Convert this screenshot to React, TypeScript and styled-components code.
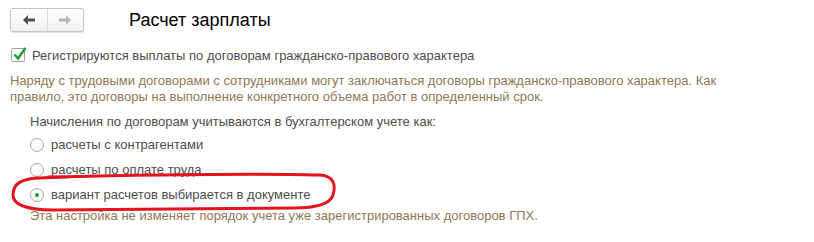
import React from "react";
import styled, { createGlobalStyle } from "styled-components";

const GlobalStyle = createGlobalStyle`
    html, body {
        margin: 0;
        padding: 0;
        background: #fff;
    }
    body {
        font-family: "Liberation Sans", Arial, sans-serif;
        font-size: 13px;
        color: #4d4d4d;
    }
`;

const Page = styled.div`
    position: relative;
    width: 814px;
    height: 242px;
    padding: 8px 10px 0;
    box-sizing: border-box;
    overflow: hidden;
`;

const Header = styled.div`
    display: flex;
    align-items: center;
    height: 24px;
`;

const NavGroup = styled.div`
    display: flex;
    width: 74px;
    height: 24px;
    box-sizing: border-box;
    border: 1px solid #c4c4c4;
    border-radius: 3px;
    background: linear-gradient(#ffffff, #f1f1f1);
    box-shadow: 0 1px 1px rgba(0, 0, 0, 0.12);
`;

const NavButton = styled.div<{ $divider?: boolean }>`
    flex: 1;
    display: flex;
    align-items: center;
    justify-content: center;
    border-left: ${(p) => (p.$divider ? "1px solid #dadada" : "none")};
`;

const Title = styled.h1`
    margin: 0 0 0 45px;
    font-size: 18px;
    font-weight: normal;
    color: #000;
`;

const CheckRow = styled.label`
    display: flex;
    align-items: center;
    margin-top: 15px;
    height: 16px;
`;

const CheckBox = styled.span`
    position: relative;
    width: 14px;
    height: 14px;
    box-sizing: border-box;
    border: 1px solid #a3a3a3;
    border-radius: 2px;
    background: #fff;
    margin: 0 7px 0 1px;
`;

const CheckMark = styled.svg`
    position: absolute;
    left: 0;
    top: -3px;
`;

const Hint = styled.p`
    margin: 0;
    color: #8f7753;
    line-height: 16px;
`;

const Description = styled(Hint)`
    margin-top: 10px;
    width: 730px;
`;

const Footnote = styled(Hint)`
    margin-top: 1px;
`;

const Section = styled.div`
    margin-top: 9px;
    padding-left: 20px;
`;

const Question = styled.div`
    line-height: 16px;
`;

const RadioList = styled.div`
    display: flex;
    flex-direction: column;
    margin-top: 2px;
`;

const RadioRow = styled.label`
    display: flex;
    align-items: center;
    height: 25px;
`;

const Radio = styled.span<{ $checked?: boolean }>`
    display: flex;
    align-items: center;
    justify-content: center;
    width: 14px;
    height: 14px;
    box-sizing: border-box;
    border: 1px solid #a8a8a8;
    border-radius: 50%;
    background: linear-gradient(#ffffff, #f4f4f4);
    margin-right: 7px;

    &::after {
        content: "";
        display: ${(p) => (p.$checked ? "block" : "none")};
        width: 4px;
        height: 4px;
        border-radius: 50%;
        background: #1e9a3c;
    }
`;

const Highlight = styled.svg`
    position: absolute;
    left: 8px;
    top: 169px;
    pointer-events: none;
`;

const Arrow = ({ dir, color }: { dir: "left" | "right"; color: string }) => (
    <svg
        width="12"
        height="10"
        viewBox="0 0 12 10"
        style={{ transform: dir === "right" ? "scaleX(-1)" : undefined }}
    >
        <path d="M0 5 L5 0 L5 3.5 L12 3.5 L12 6.5 L5 6.5 L5 10 Z" fill={color} />
    </svg>
);

const options = [
    { label: "расчеты с контрагентами", checked: false },
    { label: "расчеты по оплате труда", checked: false },
    { label: "вариант расчетов выбирается в документе", checked: true },
];

function App() {
    return (
        <Page>
            <GlobalStyle />
            <Header>
                <NavGroup>
                    <NavButton>
                        <Arrow dir="left" color="#505050" />
                    </NavButton>
                    <NavButton $divider>
                        <Arrow dir="right" color="#b8b8b8" />
                    </NavButton>
                </NavGroup>
                <Title>Расчет зарплаты</Title>
            </Header>

            <CheckRow>
                <CheckBox>
                    <CheckMark width="16" height="16" viewBox="0 0 16 16">
                        <path
                            d="M2.5 8.5 L6 12.5 L13.5 2"
                            fill="none"
                            stroke="#23a036"
                            strokeWidth="2.6"
                        />
                    </CheckMark>
                </CheckBox>
                Регистрируются выплаты по договорам гражданско-правового характера
            </CheckRow>

            <Description>
                Наряду с трудовыми договорами с сотрудниками могут заключаться
                договоры гражданско-правового характера. Как правило, это договоры
                на выполнение конкретного объема работ в определенный срок.
            </Description>

            <Section>
                <Question>Начисления по договорам учитываются в бухгалтерском учете как:</Question>
                <RadioList>
                    {options.map((o) => (
                        <RadioRow key={o.label}>
                            <Radio $checked={o.checked} />
                            {o.label}
                        </RadioRow>
                    ))}
                </RadioList>
                <Footnote>Эта настройка не изменяет порядок учета уже зарегистрированных договоров ГПХ.</Footnote>
            </Section>

            <Highlight width="332" height="46" viewBox="0 0 332 46">
                <path
                    d="M40 8 C 130 6, 250 4, 312 6 C 326 7, 328 16, 325 26 C 322 36, 306 39, 285 39 L 45 41 C 20 41, 5 36, 5 26 C 5 14, 14 10, 30 9 L 60 8"
                    fill="none"
                    stroke="#e3141d"
                    strokeWidth="3"
                    strokeLinecap="round"
                />
            </Highlight>
        </Page>
    );
}

export default App;
